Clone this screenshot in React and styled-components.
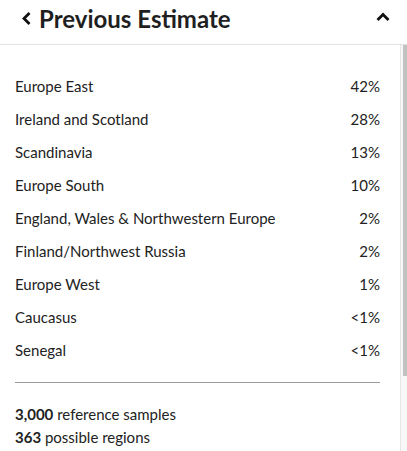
import React from "react";
import styled, { createGlobalStyle } from "styled-components";

const GlobalStyle = createGlobalStyle`
  html, body {
    margin: 0;
    padding: 0;
    background: #fff;
  }
  body {
    font-family: Lato, "Liberation Sans", sans-serif;
    color: #222;
  }
`;

const regions = [
  { name: "Europe East", pct: "42%" },
  { name: "Ireland and Scotland", pct: "28%" },
  { name: "Scandinavia", pct: "13%" },
  { name: "Europe South", pct: "10%" },
  { name: "England, Wales & Northwestern Europe", pct: "2%" },
  { name: "Finland/Northwest Russia", pct: "2%" },
  { name: "Europe West", pct: "1%" },
  { name: "Caucasus", pct: "<1%" },
  { name: "Senegal", pct: "<1%" },
];

const App = () => {
  return (
    <Panel>
      <GlobalStyle />
      <Header>
        <BackButton>
          <svg width="11" height="15" viewBox="0 0 11 15">
            <path d="M8.5 2 L3 7.5 L8.5 13" fill="none" stroke="#111" strokeWidth="2.8" />
          </svg>
          <Title>Previous Estimate</Title>
        </BackButton>
        <Collapse>
          <svg width="14" height="10" viewBox="0 0 14 10">
            <path d="M1.5 8 L7 2.5 L12.5 8" fill="none" stroke="#111" strokeWidth="2.8" />
          </svg>
        </Collapse>
      </Header>
      <BodyWrap>
        <Body>
          <List>
            {regions.map((r) => (
              <Row key={r.name}>
                <span>{r.name}</span>
                <span>{r.pct}</span>
              </Row>
            ))}
          </List>
          <Divider />
          <Stats>
            <Stat>
              <b>3,000</b> reference samples
            </Stat>
            <Stat>
              <b>363</b> possible regions
            </Stat>
          </Stats>
        </Body>
        <ScrollTrack>
          <ScrollThumb />
        </ScrollTrack>
      </BodyWrap>
    </Panel>
  );
};

const Panel = styled.div`
  width: 407px;
  height: 451px;
  display: flex;
  flex-direction: column;
  overflow: hidden;
`;
const Header = styled.div`
  height: 44px;
  flex-shrink: 0;
  display: flex;
  align-items: center;
  justify-content: space-between;
  padding: 0 17px 0 21px;
  border-bottom: 1px solid #e2e2e2;
`;
const BackButton = styled.div`
  display: flex;
  align-items: center;
  gap: 7px;
  margin-top: -7px;
`;
const Title = styled.h1`
  margin: 0;
  font-size: 24px;
  font-weight: 700;
  color: #1f1f1f;
`;
const Collapse = styled.div`
  display: flex;
  margin-top: -10px;
`;
const BodyWrap = styled.div`
  flex: 1;
  display: flex;
  min-height: 0;
`;
const Body = styled.div`
  flex: 1;
  overflow: hidden;
  padding: 0 20px 0 15px;
`;
const ScrollTrack = styled.div`
  width: 6px;
  flex-shrink: 0;
  background: #f7f7f7;
  border-left: 1px solid #e6e6e6;
  display: flex;
  justify-content: flex-end;
  align-items: flex-start;
`;
const ScrollThumb = styled.div`
  width: 4px;
  height: 331px;
  background: #c1c1c1;
`;
const List = styled.div`
  display: flex;
  flex-direction: column;
  padding-top: 24px;
`;
const Row = styled.div`
  display: flex;
  justify-content: space-between;
  align-items: center;
  height: 33px;
  font-size: 15px;
  color: #222;
`;
const Divider = styled.hr`
  margin: 16px 0 0;
  border: none;
  border-top: 1px solid #9a9a9a;
`;
const Stats = styled.div`
  padding-top: 20px;
  display: flex;
  flex-direction: column;
`;
const Stat = styled.div`
  font-size: 15px;
  line-height: 23px;
  color: #222;
  b {
    font-weight: 700;
  }
`;

export default App;
